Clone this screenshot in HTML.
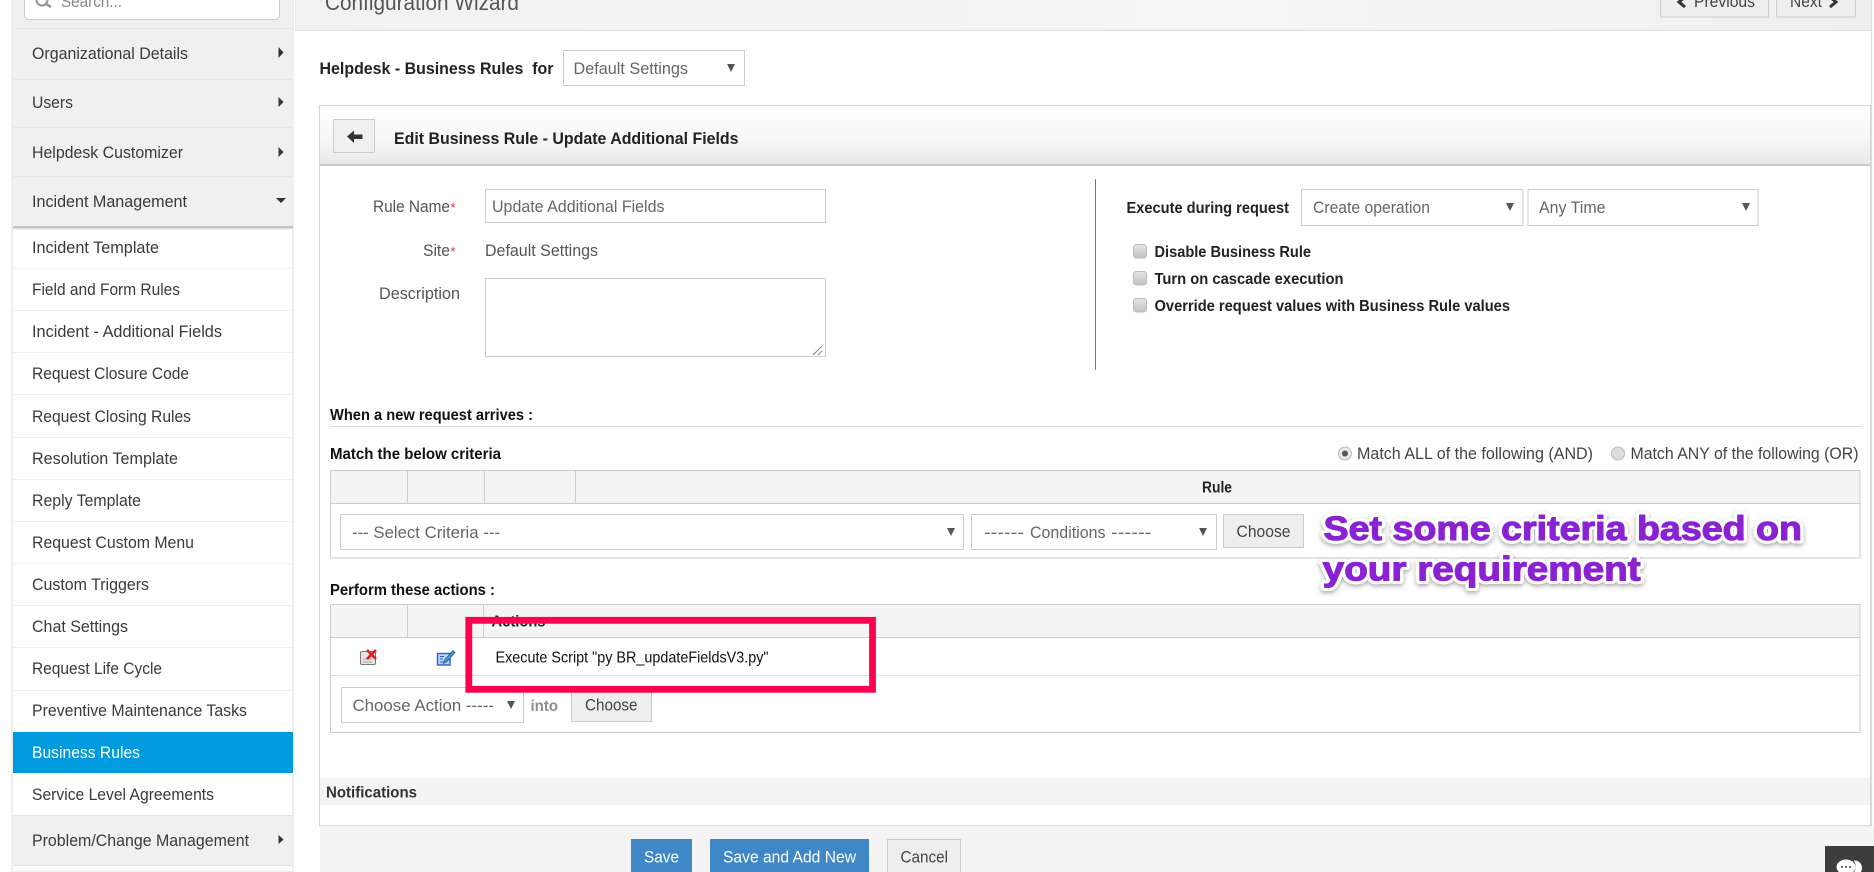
<!DOCTYPE html>
<html><head><meta charset="utf-8"><title>Business Rules</title>
<style>
html,body{margin:0;padding:0;background:#fff;width:1874px;height:872px;overflow:hidden}
svg{display:block}
text{font-family:"Liberation Sans",sans-serif;font-size:16.5px;fill:#444}
.s{fill:#3a3a3a;font-size:17px}
.b{font-weight:bold;fill:#222;font-size:16px}
.g{fill:#666;font-size:16.5px}
.k{fill:#222;font-size:16px}
.w{fill:#fff;font-size:17px}
.v{font-weight:bold;font-size:34px;fill:#fff;stroke:#fff;stroke-width:7px;stroke-linejoin:round}
.p{font-weight:bold;font-size:34px;fill:#8a22d4;stroke:#8a22d4;stroke-width:1.1px;stroke-linejoin:round}
</style></head><body>
<svg width="1874" height="872" viewBox="0 0 1874 872" xmlns="http://www.w3.org/2000/svg">
<defs>
<linearGradient id="h" x1="0" y1="0" x2="0" y2="1"><stop offset="0" stop-color="#fff"/><stop offset=".6" stop-color="#f6f6f6"/><stop offset="1" stop-color="#e9e9e9"/></linearGradient>
<linearGradient id="c" x1="0" y1="0" x2="0" y2="1"><stop offset="0" stop-color="#e4e4e4"/><stop offset="1" stop-color="#c2c2c2"/></linearGradient>
<linearGradient id="t" x1="0" y1="0" x2="1" y2="0"><stop offset="0" stop-color="#f1f1f1"/><stop offset=".6" stop-color="#f6f6f6"/><stop offset="1" stop-color="#efefef"/></linearGradient>
<linearGradient id="sh" x1="0" y1="0" x2="0" y2="1"><stop offset="0" stop-color="#bbb"/><stop offset="1" stop-color="#fff"/></linearGradient>
<filter id="ds" x="-5%" y="-20%" width="110%" height="150%"><feDropShadow dx="0" dy="2" stdDeviation="2.500" flood-color="#000" flood-opacity=".35"/></filter>
</defs>

<!-- sidebar -->
<rect x="12" y="0" width="281" height="872" fill="#fff" stroke="#ddd"/>
<rect x="13" y="0" width="280" height="227" fill="#f0f0f0"/>
<rect x="24.500" y="-10" width="255" height="29.500" rx="4" fill="#fff" stroke="#ccc"/>
<circle cx="42" cy="0" r="5.500" fill="none" stroke="#999" stroke-width="2.200"/>
<path d="M46 4l5 3" stroke="#999" stroke-width="2.500"/>
<text x="61" y="7" textLength="61" lengthAdjust="spacingAndGlyphs" style="fill:#888">Search...</text>
<g stroke="#e6e6e6"><path d="M13 28.500h280M13 79.500h280M13 127.500h280M13 176.500h280"/></g>
<rect x="13" y="226" width="280" height="1" fill="#c4c4c4"/>
<rect x="13" y="227" width="280" height="3" fill="url(#sh)"/>
<g stroke="#f0f0f0"><path d="M13 268.500h280M13 310.500h280M13 352.500h280M13 394.500h280M13 437.500h280M13 479.500h280M13 521.500h280M13 563.500h280M13 605.500h280M13 647.500h280M13 690.500h280"/></g>
<rect x="13" y="732" width="280" height="41" fill="#009bde"/>
<rect x="13" y="815" width="280" height="50" fill="#f0f0f0"/>
<path d="M13 865.500h280" stroke="#e2e2e2"/>
<path d="M13 815.500h280" stroke="#e2e2e2"/>
<g fill="#333">
<path d="M278.500 47l5 5.500-5 5.500zM278.500 97l5 5-5 5zM278.500 147l5 5-5 5zM278.500 835l5 4.500-5 4.500zM276 198h10l-5 5z"/>
</g>
<text class="s" x="32" y="59" textLength="156" lengthAdjust="spacingAndGlyphs">Organizational Details</text>
<text class="s" x="32" y="108" textLength="41" lengthAdjust="spacingAndGlyphs">Users</text>
<text class="s" x="32" y="158" textLength="151" lengthAdjust="spacingAndGlyphs">Helpdesk Customizer</text>
<text class="s" x="32" y="207" textLength="155" lengthAdjust="spacingAndGlyphs">Incident Management</text>
<text class="s" x="32" y="253" textLength="127" lengthAdjust="spacingAndGlyphs">Incident Template</text>
<text class="s" x="32" y="295" textLength="148" lengthAdjust="spacingAndGlyphs">Field and Form Rules</text>
<text class="s" x="32" y="337" textLength="190" lengthAdjust="spacingAndGlyphs">Incident - Additional Fields</text>
<text class="s" x="32" y="379" textLength="157" lengthAdjust="spacingAndGlyphs">Request Closure Code</text>
<text class="s" x="32" y="422" textLength="159" lengthAdjust="spacingAndGlyphs">Request Closing Rules</text>
<text class="s" x="32" y="464" textLength="146" lengthAdjust="spacingAndGlyphs">Resolution Template</text>
<text class="s" x="32" y="506" textLength="109" lengthAdjust="spacingAndGlyphs">Reply Template</text>
<text class="s" x="32" y="548" textLength="162" lengthAdjust="spacingAndGlyphs">Request Custom Menu</text>
<text class="s" x="32" y="590" textLength="117" lengthAdjust="spacingAndGlyphs">Custom Triggers</text>
<text class="s" x="32" y="632" textLength="96" lengthAdjust="spacingAndGlyphs">Chat Settings</text>
<text class="s" x="32" y="674" textLength="130" lengthAdjust="spacingAndGlyphs">Request Life Cycle</text>
<text class="s" x="32" y="716" textLength="215" lengthAdjust="spacingAndGlyphs">Preventive Maintenance Tasks</text>
<text class="w" x="32" y="758" textLength="108" lengthAdjust="spacingAndGlyphs">Business Rules</text>
<text class="s" x="32" y="800" textLength="182" lengthAdjust="spacingAndGlyphs">Service Level Agreements</text>
<text class="s" x="32" y="846" textLength="217" lengthAdjust="spacingAndGlyphs">Problem/Change Management</text>

<!-- top bar -->
<rect x="295" y="0" width="1577" height="30" fill="url(#t)"/>
<path d="M295 30.500h1577" stroke="#ddd"/>
<path d="M1871.500 0v872" stroke="#ddd"/>
<text x="325" y="10" textLength="194" lengthAdjust="spacingAndGlyphs" style="font-size:22px;fill:#555">Configuration Wizard</text>
<rect x="1660.500" y="-10" width="108" height="27" fill="#eee" stroke="#ccc"/>
<rect x="1776.500" y="-10" width="79" height="27" fill="#eee" stroke="#ccc"/>
<path d="M1685 -3l-6 5 6 5" fill="none" stroke="#333" stroke-width="3"/>
<path d="M1830 -3l6 5-6 5" fill="none" stroke="#333" stroke-width="3"/>
<text x="1694" y="7" textLength="61" lengthAdjust="spacingAndGlyphs" style="fill:#444">Previous</text>
<text x="1790" y="7" textLength="32" lengthAdjust="spacingAndGlyphs" style="fill:#444">Next</text>

<!-- title + select -->
<text class="b" x="319.500" y="74" textLength="234" lengthAdjust="spacingAndGlyphs" style="font-size:17px" xml:space="preserve">Helpdesk - Business Rules  for</text>
<rect x="563.500" y="50.500" width="181" height="35" fill="#fff" stroke="#ccc"/>
<text class="g" x="573.500" y="74" textLength="114.500" lengthAdjust="spacingAndGlyphs">Default Settings</text>
<path d="M727 64h8l-4 8z" fill="#555"/>

<!-- panel -->
<rect x="319.500" y="105.500" width="1551" height="720" fill="#fff" stroke="#d5d5d5"/>
<rect x="320" y="106" width="1550" height="58" fill="url(#h)"/>
<rect x="320" y="164" width="1550" height="2" fill="#c8c8c8"/>
<rect x="333.500" y="119.500" width="41" height="33" fill="#f0f0f0" stroke="#ccc"/>
<path d="M347 136.500l7-6v4h8.500v4.500h-8.500v4z" fill="#333"/>
<text class="b" x="394" y="144" textLength="344.500" lengthAdjust="spacingAndGlyphs" style="font-size:17px">Edit Business Rule - Update Additional Fields</text>

<!-- form left -->
<text class="g" x="373" y="212" textLength="77" lengthAdjust="spacingAndGlyphs" style="fill:#555">Rule Name</text>
<text x="450.500" y="212" style="fill:#e03030;font-size:13px">*</text>
<rect x="485.500" y="189.500" width="340" height="33" fill="#fff" stroke="#ccc"/>
<text class="g" x="492" y="212" textLength="172.500" lengthAdjust="spacingAndGlyphs">Update Additional Fields</text>
<text class="g" x="423" y="256" textLength="27" lengthAdjust="spacingAndGlyphs" style="fill:#555">Site</text>
<text x="450.500" y="256" style="fill:#e03030;font-size:13px">*</text>
<text class="g" x="485" y="256" textLength="113" lengthAdjust="spacingAndGlyphs" style="fill:#555">Default Settings</text>
<text class="g" x="379" y="299" textLength="81" lengthAdjust="spacingAndGlyphs" style="fill:#555">Description</text>
<rect x="485.500" y="278.500" width="340" height="78" fill="#fff" stroke="#ccc"/>
<path d="M822 346l-9 9M822 351l-4 4" stroke="#888"/>

<!-- form right -->
<path d="M1095.500 179v191" stroke="#7a7a4e" stroke-width="1"/>
<text class="b" x="1126.500" y="213" textLength="162.500" lengthAdjust="spacingAndGlyphs">Execute during request</text>
<rect x="1301.500" y="189.500" width="221.500" height="36" fill="#fff" stroke="#ccc"/>
<text class="g" x="1313" y="213" textLength="117" lengthAdjust="spacingAndGlyphs">Create operation</text>
<path d="M1506 203h8l-4 8z" fill="#555"/>
<rect x="1528" y="189.500" width="230" height="36" fill="#fff" stroke="#ccc"/>
<text class="g" x="1539" y="213" textLength="66.500" lengthAdjust="spacingAndGlyphs">Any Time</text>
<path d="M1742 203h8l-4 8z" fill="#555"/>
<rect x="1133.500" y="244.500" width="13" height="13.500" rx="3" fill="url(#c)" stroke="#bbb"/>
<rect x="1133.500" y="271.500" width="13" height="13.500" rx="3" fill="url(#c)" stroke="#bbb"/>
<rect x="1133.500" y="298.500" width="13" height="13.500" rx="3" fill="url(#c)" stroke="#bbb"/>
<text class="b" x="1154.500" y="257" textLength="156.500" lengthAdjust="spacingAndGlyphs">Disable Business Rule</text>
<text class="b" x="1154.500" y="284" textLength="189" lengthAdjust="spacingAndGlyphs">Turn on cascade execution</text>
<text class="b" x="1154.500" y="311" textLength="355.500" lengthAdjust="spacingAndGlyphs">Override request values with Business Rule values</text>

<!-- when -->
<text class="b" x="330" y="420" textLength="203" lengthAdjust="spacingAndGlyphs" style="fill:#111">When a new request arrives :</text>
<path d="M330 426.500h1532" stroke="#ddd"/>
<text class="b" x="330" y="459" textLength="171" lengthAdjust="spacingAndGlyphs" style="fill:#111">Match the below criteria</text>
<circle cx="1345" cy="453.500" r="6.500" fill="#e8e8e8" stroke="#bbb"/><circle cx="1345" cy="453.500" r="3" fill="#555"/>
<text class="g" x="1357" y="459" textLength="236" lengthAdjust="spacingAndGlyphs" style="fill:#444">Match ALL of the following (AND)</text>
<circle cx="1618" cy="453.500" r="6.500" fill="#ddd" stroke="#bbb"/>
<text class="g" x="1630.500" y="459" textLength="228" lengthAdjust="spacingAndGlyphs" style="fill:#444">Match ANY of the following (OR)</text>

<!-- criteria table -->
<rect x="330.500" y="470.500" width="1529.500" height="87.500" fill="#fff" stroke="#ccc"/>
<rect x="331" y="471" width="1528.500" height="32" fill="#f4f4f4"/>
<path d="M331 503.500h1529M407.500 471v32M484.500 471v32M575.500 471v32" stroke="#ccc"/>
<text class="b" x="1202" y="492.500" textLength="30" lengthAdjust="spacingAndGlyphs" style="fill:#222">Rule</text>
<rect x="340.500" y="514.500" width="623" height="35" fill="#fff" stroke="#ccc"/>
<text class="g" x="352" y="538" textLength="148" lengthAdjust="spacingAndGlyphs">--- Select Criteria ---</text>
<path d="M947 528h8l-4 8z" fill="#555"/>
<rect x="971.500" y="514.500" width="245" height="35" fill="#fff" stroke="#ccc"/>
<text class="g" x="984" y="538" textLength="40" lengthAdjust="spacingAndGlyphs">------</text>
<text class="g" x="1030" y="538" textLength="75.500" lengthAdjust="spacingAndGlyphs">Conditions</text>
<text class="g" x="1111" y="538" textLength="40.500" lengthAdjust="spacingAndGlyphs">------</text>
<path d="M1199 528h8l-4 8z" fill="#555"/>
<rect x="1223.500" y="514.500" width="80" height="33" fill="#eee" stroke="#ccc"/>
<text class="g" x="1236.500" y="537" textLength="54" lengthAdjust="spacingAndGlyphs" style="fill:#444">Choose</text>

<!-- actions -->
<text class="b" x="330" y="595" textLength="165" lengthAdjust="spacingAndGlyphs" style="fill:#111">Perform these actions :</text>
<rect x="330.500" y="604.500" width="1529.500" height="128" fill="#fff" stroke="#ccc"/>
<rect x="331" y="605" width="1528.500" height="32" fill="#f4f4f4"/>
<path d="M331 637.500h1529M407.500 605v32M483.500 605v32" stroke="#ccc"/>
<path d="M331 675.500h1529" stroke="#ddd"/>
<text class="b" x="491.500" y="626.500" textLength="54" lengthAdjust="spacingAndGlyphs" style="fill:#222">Actions</text>
<!-- delete icon -->
<rect x="360.500" y="651.500" width="15" height="13" rx="1.500" fill="#e4e4e4" stroke="#777"/>
<path d="M363 659h9M363 662h9" stroke="#aaa"/>
<path d="M367 650l9 9M376 650l-9 9" stroke="#d8201c" stroke-width="2.600"/>
<!-- edit icon -->
<rect x="437.500" y="653.500" width="12.500" height="11.500" fill="#bcd4f6" stroke="#2c5fcf" stroke-width="1.400"/>
<path d="M440 656.500h4M440 659h3M440 662h4" stroke="#2c5fcf"/>
<path d="M443.500 663.500l1.500-4 8-9 2 2-8 9z" fill="#3a9ad9" stroke="#22506e" stroke-width=".7"/>
<text class="k" x="495.500" y="662.500" textLength="273" lengthAdjust="spacingAndGlyphs" style="fill:#111">Execute Script "py BR_updateFieldsV3.py"</text>
<rect x="341.500" y="687.500" width="182" height="35" fill="#fff" stroke="#ccc"/>
<text class="g" x="352.500" y="711" textLength="141.500" lengthAdjust="spacingAndGlyphs">Choose Action -----</text>
<path d="M507 701h8l-4 8z" fill="#555"/>
<text x="530.500" y="711" textLength="27.500" lengthAdjust="spacingAndGlyphs" style="font-weight:bold;fill:#8d8d8d;font-size:16px">into</text>
<rect x="571.500" y="687.500" width="80" height="34" fill="#eee" stroke="#ccc"/>
<text class="g" x="585" y="710.500" textLength="52.500" lengthAdjust="spacingAndGlyphs" style="fill:#444">Choose</text>

<!-- red highlight -->
<rect x="468.800" y="620.300" width="403.700" height="69" fill="none" stroke="#ff0050" stroke-width="6.800"/>

<!-- annotation -->
<g filter="url(#ds)">
<text class="v" x="1323.500" y="540" textLength="478.500" lengthAdjust="spacingAndGlyphs">Set some criteria based on</text>
<text class="v" x="1322.700" y="580.500" textLength="318" lengthAdjust="spacingAndGlyphs">your requirement</text>
</g>
<text class="p" x="1323.500" y="540" textLength="478.500" lengthAdjust="spacingAndGlyphs">Set some criteria based on</text>
<text class="p" x="1322.700" y="580.500" textLength="318" lengthAdjust="spacingAndGlyphs">your requirement</text>

<!-- notifications -->
<rect x="320" y="778" width="1550" height="27" fill="#f4f4f4"/>
<text class="b" x="326" y="797.500" textLength="91" lengthAdjust="spacingAndGlyphs" style="fill:#333">Notifications</text>

<!-- footer -->
<rect x="320" y="826" width="1554" height="46" fill="#f4f4f4"/>
<path d="M320 825.500h1551" stroke="#ddd"/>
<rect x="631" y="839" width="61" height="40" fill="#3f87c6"/>
<text class="w" x="644" y="862.500" textLength="35" lengthAdjust="spacingAndGlyphs" style="font-size:16.500px">Save</text>
<rect x="710" y="839" width="159" height="40" fill="#3f87c6"/>
<text class="w" x="723" y="862.500" textLength="133" lengthAdjust="spacingAndGlyphs" style="font-size:16.500px">Save and Add New</text>
<rect x="887.500" y="839.500" width="73" height="40" fill="#eee" stroke="#ccc"/>
<text class="g" x="900.500" y="862.500" textLength="47.500" lengthAdjust="spacingAndGlyphs" style="fill:#444">Cancel</text>

<!-- chat -->
<rect x="1825" y="846" width="49" height="26" fill="#3d3d3d"/>
<ellipse cx="1855" cy="868" rx="7" ry="7.500" fill="#fff"/>
<path d="M1852 860c4 3 4 10 0 14" fill="none" stroke="#3d3d3d" stroke-width="1.200"/>
<ellipse cx="1846" cy="867" rx="9.500" ry="7.500" fill="#fff"/>
<circle cx="1842" cy="867" r="1" fill="#3d3d3d"/><circle cx="1846" cy="867" r="1" fill="#3d3d3d"/><circle cx="1850" cy="867" r="1" fill="#3d3d3d"/>
</svg>
</body></html>
